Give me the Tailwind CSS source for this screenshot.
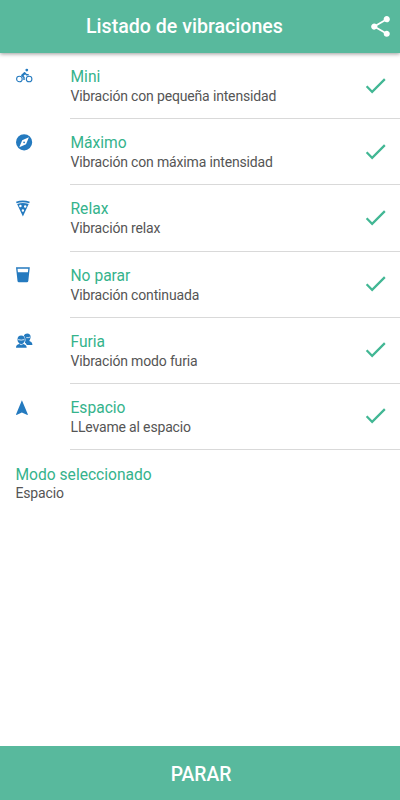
<!DOCTYPE html>
<html lang="es">
<head>
  <meta charset="UTF-8"/>
  <meta name="viewport" content="width=device-width, initial-scale=1.0"/>
  <title>Listado de vibraciones</title>
  <script src="https://cdn.jsdelivr.net/npm/@tailwindcss/browser@4"></script>
</head>
<body class="bg-white font-[Roboto,sans-serif]">
  <div class="flex h-[800px] w-[400px] flex-col overflow-hidden">

    <!-- Cabecera -->
    <header class="flex h-[53px] shrink-0 items-center justify-between bg-[#58b99d] pr-[7px] pl-[86px] text-white shadow-[0_1px_4px_rgba(0,0,0,0.4)]">
      <h1 class="text-[19.6px] leading-6 font-medium">Listado de vibraciones</h1>
      <svg class="size-[25px]" viewBox="0 0 24 24" fill="currentColor">
        <path d="M18 16.08c-.76 0-1.44.3-1.96.77L8.91 12.7c.05-.23.09-.46.09-.7s-.04-.47-.09-.7l7.05-4.11c.54.5 1.25.81 2.04.81 1.66 0 3-1.34 3-3s-1.34-3-3-3-3 1.34-3 3c0 .24.04.47.09.7L8.04 9.81C7.5 9.31 6.79 9 6 9c-1.66 0-3 1.34-3 3s1.34 3 3 3c.79 0 1.5-.31 2.04-.81l7.12 4.16c-.05.21-.08.43-.08.65 0 1.61 1.31 2.92 2.92 2.92s2.92-1.31 2.92-2.92-1.31-2.92-2.92-2.92z"/>
      </svg>
    </header>

    <!-- Lista de vibraciones -->
    <main class="flex-1">
      <ul id="lista"></ul>
      <section class="pt-[14.5px] pl-[15.5px]">
        <h2 class="text-[15.6px] leading-5 text-[#35b38c]">Modo seleccionado</h2>
        <p class="text-sm leading-[17px] tracking-[-0.16px] text-[#555]">Espacio</p>
      </section>
    </main>

    <!-- Pie -->
    <footer class="flex h-[54px] shrink-0 items-center justify-center bg-[#58b99d] pt-[4px] pl-[2px] text-[19.3px] font-medium text-white">PARAR</footer>
  </div>

  <script>
    const vibraciones = [
      {
        nombre: 'Mini',
        texto: 'Vibración con pequeña intensidad',
        icono: `<g fill="none" stroke="currentColor" stroke-width="1.1"><circle cx="3.4" cy="11" r="2.8"/><circle cx="13.1" cy="11" r="2.8"/><path d="M8 12V9.4L6.1 7.7L8.8 5.1L10.5 6.8H12.7" stroke-width="1.4"/></g><path d="M4.9 7.3L8.3 4L9.8 5.6L7.1 8.3Z"/><circle cx="10.8" cy="2.1" r="1.4"/>`
      },
      {
        nombre: 'Máximo',
        texto: 'Vibración con máxima intensidad',
        icono: `<path fill-rule="evenodd" d="M8.1 .2a8.1 8.1 0 1 0 0 16.2A8.1 8.1 0 0 0 8.1 .2zM12.9 3.3L10 10.2L3.3 13.2L6.2 6.3zM8.1 7.4a.9.9 0 1 0 0 1.8a.9.9 0 0 0 0-1.8z"/>`
      },
      {
        nombre: 'Relax',
        texto: 'Vibración relax',
        icono: `<path d="M0 1.8C4.4.2 9.2.2 13.8 1.8L13.2 3.3C9 1.9 4.6 1.9.6 3.3Z"/><path fill-rule="evenodd" d="M1.1 4C4.9 2.8 8.9 2.8 12.7 4L6.9 16.4zM4.4 4.7a1.25 1.25 0 1 0 0 2.5a1.25 1.25 0 0 0 0-2.5zM9.2 5.3a1.25 1.25 0 1 0 0 2.5a1.25 1.25 0 0 0 0-2.5zM6.9 9.3a1.2 1.2 0 1 0 0 2.4a1.2 1.2 0 0 0 0-2.4z"/>`
      },
      {
        nombre: 'No parar',
        texto: 'Vibración continuada',
        icono: `<path fill-rule="evenodd" d="M0 .3H13.8L12.3 14Q12.1 15.3 10.9 15.3H2.9Q1.7 15.3 1.5 14zM1.5 1.8L1.9 5.3H11.9L12.3 1.8z"/>`
      },
      {
        nombre: 'Furia',
        texto: 'Vibración modo furia',
        icono: `<path d="M11.2.6C13.4.6 14.7 2 14.6 4.1C14.5 6.1 13.8 7 13.3 7.9C14.6 8.6 16.4 8.9 16.4 11.9H10.8C10.2 10.5 9 10 8.9 9.5C9.4 8 9.7 6.9 9.2 5.2C8.6 3.5 7.8 3 7.9 2.6C8.5 1.4 9.7.6 11.2.6z"/><path d="M0 14.8C0 12.3 1.1 11.6 3.2 11L3.3 10.3C2.1 9.3 1.5 8.1 1.5 6.4C1.5 4 2.9 2.6 5.2 2.6S8.9 4 8.9 6.4C8.9 8.1 8.3 9.3 7.1 10.3L7.2 11C9.3 11.6 10.7 12.3 10.7 14.8z"/><path d="M2.1 6.6Q5.2 7.6 8.3 6.6M3.7 11Q5.2 12.3 6.8 11M10.3 4.6Q12.4 5 14 4.1" fill="none" stroke="white" stroke-width=".8"/>`
      },
      {
        nombre: 'Espacio',
        texto: 'LLevame al espacio',
        icono: `<path d="M5.9 1.3L11.9 15.4L11.4 15.9L5.9 13.4L.5 15.9L0 15.4z"/>`
      }
    ];

    const lista = document.getElementById('lista');
    vibraciones.forEach(v => {
      const li = document.createElement('li');
      li.className = 'flex h-[66.2px] pl-[15.5px]';
      li.innerHTML = `
        <svg class="mt-[15px] mr-[37px] h-[18px] w-[18px] shrink-0 overflow-visible text-[#247abf]" viewBox="0 0 18 18" fill="currentColor">${v.icono}</svg>
        <div class="-ml-[0.5px] flex flex-1 border-b border-[#d9d9d9] pt-[14px]">
          <div class="flex-1 pl-[0.5px]">
            <h2 class="text-[15.6px] leading-5 text-[#35b38c]">${v.nombre}</h2>
            <p class="text-sm leading-[19px] tracking-[-0.16px] text-[#555]">${v.texto}</p>
          </div>
          <svg class="mt-[4.5px] mr-[11px] size-[27px] text-[#42b794]" viewBox="0 0 24 24" fill="currentColor">
            <path d="M9 16.17L4.83 12l-1.42 1.41L9 19 21 7l-1.41-1.41z"/>
          </svg>
        </div>`;
      lista.append(li);
    });
  </script>
</body>
</html>
